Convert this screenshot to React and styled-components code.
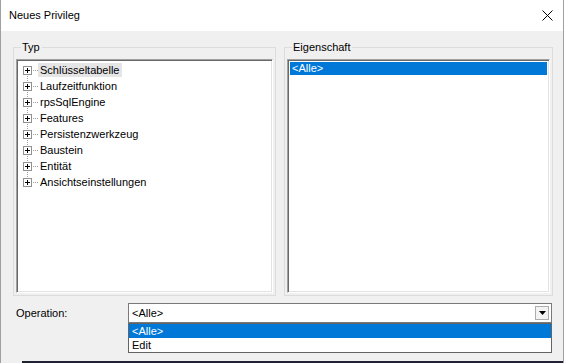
import React from "react";
import styled, { createGlobalStyle } from "styled-components";

const typen = [
  "Schlüsseltabelle",
  "Laufzeitfunktion",
  "rpsSqlEngine",
  "Features",
  "Persistenzwerkzeug",
  "Baustein",
  "Entität",
  "Ansichtseinstellungen",
];

const PlusBox = () => (
  <svg width="9" height="9" viewBox="0 0 9 9">
    <rect x="0.5" y="0.5" width="8" height="8" fill="#fff" stroke="#919191" />
    <path d="M2 4.5h5M4.5 2v5" stroke="#000" strokeWidth="1" />
  </svg>
);

const App = () => {
  return (
    <>
      <GlobalStyle />
      <Window>
        <TitleBar>
          <Title>Neues Privileg</Title>
          <CloseButton>
            <svg width="11" height="11" viewBox="0 0 11 11">
              <path d="M0.5 0.5l10 10M10.5 0.5l-10 10" stroke="#000" strokeWidth="1" />
            </svg>
          </CloseButton>
        </TitleBar>
        <Body>
          <Panels>
            <Group>
              <Legend>Typ</Legend>
              <ListBox>
                {typen.map((name, i) => (
                  <TreeRow key={name} $first={i === 0} $last={i === typen.length - 1}>
                    <Expander>
                      <PlusBox />
                    </Expander>
                    <Branch />
                    <TreeLabel $hover={i === 0}>{name}</TreeLabel>
                  </TreeRow>
                ))}
              </ListBox>
            </Group>
            <Group>
              <Legend>Eigenschaft</Legend>
              <ListBox>
                <ListItem $selected>&lt;Alle&gt;</ListItem>
              </ListBox>
            </Group>
          </Panels>
          <OperationRow>
            <FieldLabel>Operation:</FieldLabel>
            <Combo>
              <ComboValue>&lt;Alle&gt;</ComboValue>
              <ArrowButton>
                <svg width="7" height="4" viewBox="0 0 7 4">
                  <path d="M0 0h7L3.5 4z" fill="#000" />
                </svg>
              </ArrowButton>
              <DropList>
                <DropItem $selected>&lt;Alle&gt;</DropItem>
                <DropItem>Edit</DropItem>
              </DropList>
            </Combo>
          </OperationRow>
          <ButtonRow>
            <DialogButton>OK</DialogButton>
            <DialogButton>Abbrechen</DialogButton>
          </ButtonRow>
        </Body>
        <DesktopEdge />
      </Window>
    </>
  );
};

const GlobalStyle = createGlobalStyle`
  html, body {
    margin: 0;
    padding: 0;
    background: #f0f0f0;
  }
  * {
    box-sizing: border-box;
  }
`;

const Window = styled.div`
  width: 564px;
  height: 363px;
  display: flex;
  flex-direction: column;
  font-family: "Liberation Sans", Arial, sans-serif;
  font-size: 11px;
  color: #000;
  border-left: 1px solid #a0a0a0;
  border-right: 1px solid #a0a0a0;
  background: #f0f0f0;
  overflow: hidden;
`;

const TitleBar = styled.div`
  height: 31px;
  flex: none;
  background: #fff;
  display: flex;
  align-items: center;
  justify-content: space-between;
  padding: 0 10px 0 8px;
`;

const Title = styled.div`
  font-size: 11px;
  padding-bottom: 1px;
`;

const CloseButton = styled.div`
  width: 12px;
  height: 12px;
  display: flex;
  align-items: center;
  justify-content: center;
`;

const Body = styled.div`
  flex: 1;
  min-height: 0;
  padding: 10px 9px 0 12px;
  display: flex;
  flex-direction: column;
`;

const Panels = styled.div`
  display: grid;
  grid-template-columns: 263px 269px;
  column-gap: 8px;
`;

const Group = styled.fieldset`
  margin: 0;
  padding: 5px 2px 2px 2px;
  min-width: 0;
  border: 1px solid #dcdcdc;
  display: flex;
  flex-direction: column;
`;

const Legend = styled.legend`
  margin-left: 5px;
  padding: 0 2px 0 1px;
  line-height: 13px;
  height: 13px;
  font-size: 11px;
`;

const ListBox = styled.div`
  height: 234px;
  background: #fff;
  border: 1px solid;
  border-color: #a0a0a0 #fff #fff #a0a0a0;
  box-shadow: inset 1px 1px 0 #696969, inset -1px -1px 0 #e3e3e3;
  padding: 2px 2px;
  overflow: hidden;
`;

const TreeRow = styled.div`
  position: relative;
  height: 16px;
  display: flex;
  align-items: center;
  padding-left: 4px;
  &::before {
    content: "";
    position: absolute;
    left: 8px;
    width: 1px;
    top: ${({ $first }) => ($first ? "50%" : "0")};
    bottom: ${({ $last }) => ($last ? "50%" : "0")};
    background: repeating-linear-gradient(to bottom, #a0a0a0 0 1px, transparent 1px 2px);
  }
`;

const Expander = styled.span`
  position: relative;
  width: 9px;
  height: 9px;
  display: flex;
`;

const Branch = styled.span`
  width: 5px;
  height: 1px;
  margin-left: 1px;
  background: repeating-linear-gradient(to right, #a0a0a0 0 1px, transparent 1px 2px);
`;

const TreeLabel = styled.span`
  padding: 0 2px;
  height: 14px;
  line-height: 14px;
  white-space: nowrap;
  background: ${({ $hover }) => ($hover ? "#e5e5e5" : "transparent")};
`;

const ListItem = styled.div`
  height: 13px;
  line-height: 13px;
  padding-left: 2px;
  background: ${({ $selected }) => ($selected ? "#0078d7" : "transparent")};
  color: ${({ $selected }) => ($selected ? "#fff" : "#000")};
`;

const OperationRow = styled.div`
  margin-top: 7px;
  display: grid;
  grid-template-columns: 112px 1fr;
  align-items: center;
  padding: 0 2px 0 3px;
`;

const FieldLabel = styled.div`
  line-height: 14px;
`;

const Combo = styled.div`
  position: relative;
  height: 20px;
  background: #fff;
  border: 1px solid #7a7a7a;
  display: flex;
  align-items: center;
  justify-content: space-between;
  padding: 0 2px 0 3px;
`;

const ComboValue = styled.span`
  line-height: 14px;
`;

const ArrowButton = styled.div`
  width: 14px;
  height: 14px;
  border: 1px solid #adadad;
  background: #f3f3f3;
  display: flex;
  align-items: center;
  justify-content: center;
`;

const DropList = styled.div`
  position: absolute;
  z-index: 2;
  left: -1px;
  right: -1px;
  top: calc(100% + 1px);
  background: #fff;
  border: 1px solid #646464;
`;

const DropItem = styled.div`
  height: 14px;
  line-height: 14px;
  padding-left: 3px;
  background: ${({ $selected }) => ($selected ? "#0078d7" : "#fff")};
  color: ${({ $selected }) => ($selected ? "#fff" : "#000")};
`;

const ButtonRow = styled.div`
  margin-top: 7px;
  display: flex;
  justify-content: flex-end;
  gap: 7px;
  padding-right: 2px;
`;

const DialogButton = styled.div`
  width: 74px;
  height: 23px;
  border: 1px solid #adadad;
  background: #e1e1e1;
  display: flex;
  align-items: center;
  justify-content: center;
`;

const DesktopEdge = styled.div`
  height: 2px;
  flex: none;
  margin-left: 21px;
  background: #1e2233;
`;

export default App;
